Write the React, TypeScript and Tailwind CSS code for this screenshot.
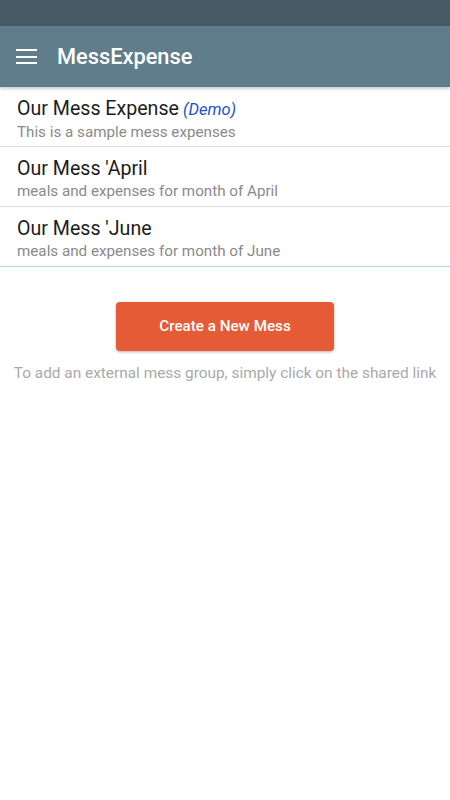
import React from "react";

const items = [
  { title: "Our Mess Expense", demo: true, sub: "This is a sample mess expenses" },
  { title: "Our Mess 'April", sub: "meals and expenses for month of April" },
  { title: "Our Mess 'June", sub: "meals and expenses for month of June" },
];

export default function App() {
  return (
    <div className="w-[450px] h-[800px] bg-white flex flex-col" style={{ fontFamily: "Roboto, 'Noto Sans', sans-serif" }}>
      <div className="h-[26px] bg-[#455a64] shrink-0" />
      <div className="h-[61px] bg-[#607d8b] flex items-center shrink-0 shadow-[0_2px_3px_rgba(0,0,0,0.2)] relative z-10">
        <div className="w-[21px] ml-[16px] flex flex-col gap-[4.5px]">
          <div className="h-[2px] bg-white" />
          <div className="h-[2px] bg-white" />
          <div className="h-[2px] bg-white" />
        </div>
        <div className="ml-[20px] mt-[2px] text-white text-[21.8px] font-medium">MessExpense</div>
      </div>
      <div className="flex flex-col">
        {items.map((it, i) => (
          <div
            key={i}
            className={`h-[60px] px-[17px] pt-[9px] border-b ${i === 2 ? "border-[#b3d4ea]" : "border-[#dcdcdc]"}`}
          >
            <div className="text-[19.6px] leading-[25px] text-[#1c1c1c]">
              {it.title}
              {it.demo && <span className="italic text-[#1e50c8] text-[16.5px] ml-[4px]">(Demo)</span>}
            </div>
            <div className="text-[15.2px] leading-[20px] text-[#8a8a8a]">{it.sub}</div>
          </div>
        ))}
      </div>
      <div className="flex flex-col items-center">
        <button className="mt-[35px] w-[218px] h-[49px] rounded-[4px] bg-[#e55b36] text-white text-[15.2px] font-medium shadow-[0_1px_3px_rgba(0,0,0,0.3)]">
          Create a New Mess
        </button>
        <div className="mt-[11px] text-[15.4px] text-[#a9a9a9] whitespace-nowrap">To add an external mess group, simply click on the shared link</div>
      </div>
    </div>
  );
}
